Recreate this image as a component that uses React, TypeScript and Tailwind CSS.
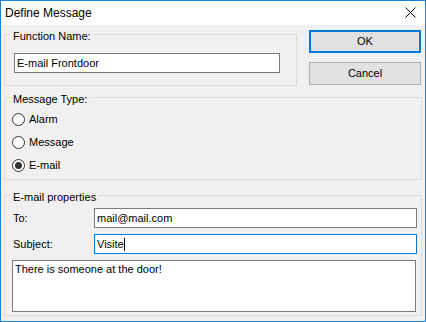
import React from "react";

type RadioProps = {
  label: string;
  checked?: boolean;
};

const Radio = ({ label, checked }: RadioProps) => {
  return (
    <div className="h-[23px] flex items-center">
      <span className="w-[13px] h-[13px] rounded-full border border-[#333333] bg-white flex items-center justify-center">
        {checked && <span className="w-[7px] h-[7px] rounded-full bg-[#333333]" />}
      </span>
      <span className="ml-[4px]">{label}</span>
    </div>
  );
};

const Legend = ({ children }: { children: React.ReactNode }) => (
  <legend className="ml-[5px] pl-[3px] pr-[2px] pt-[4px] leading-[13px]">{children}</legend>
);

const App = () => {
  return (
    <div className="w-[426px] h-[322px] border border-[#1883d7] bg-[#f0f0f0] flex flex-col text-[11px] leading-[13px] text-black font-['Liberation_Sans',Arial,sans-serif]">
      {/* title bar */}
      <div className="h-[24px] bg-white flex items-center justify-between pl-[4px] pr-[9px] shrink-0">
        <span className="text-[12px] pt-[1px]">Define Message</span>
        <svg width="11" height="11" viewBox="0 0 11 11" className="mb-[1px]">
          <path d="M0.5 0.5 L10.5 10.5 M10.5 0.5 L0.5 10.5" stroke="#000" strokeWidth="1" />
        </svg>
      </div>

      <div className="flex-1 px-[3px]">
        <div className="flex">
          <fieldset className="w-[293px] mt-[1px] border border-[#dcdcdc]">
            <Legend>Function Name:</Legend>
            <div className="pl-[9px] pb-[12px]">
              <input
                readOnly
                value="E-mail Frontdoor"
                className="mt-[10px] w-[266px] h-[20px] border border-[#7a7a7a] bg-white px-[2px] outline-none"
              />
            </div>
          </fieldset>
          <div className="ml-[12px] mt-[5px] flex flex-col gap-[9px]">
            <button className="w-[112px] h-[23px] border-2 border-[#0078d7] bg-[#e1e1e1]">OK</button>
            <button className="w-[112px] h-[23px] border border-[#adadad] bg-[#e1e1e1]">Cancel</button>
          </div>
        </div>

        <fieldset className="mt-[3px] w-[418px] border border-[#dcdcdc]">
          <Legend>Message Type:</Legend>
          <div className="mt-[2px] pl-[7px] pb-[2px] flex flex-col">
            <Radio label="Alarm" />
            <Radio label="Message" />
            <Radio label="E-mail" checked />
          </div>
        </fieldset>

        <fieldset className="mt-[7px] w-[418px] border border-[#dcdcdc]">
          <Legend>E-mail properties</Legend>
          <div className="mt-[4px] pl-[8px] pr-[4px] pb-[3px] flex flex-col gap-[6px]">
            <div className="flex items-center">
              <span className="w-[81px]">To:</span>
              <input
                readOnly
                value="mail@mail.com"
                className="w-[323px] h-[20px] border border-[#7a7a7a] bg-white px-[2px] outline-none"
              />
            </div>
            <div className="flex items-center">
              <span className="w-[81px]">Subject:</span>
              <div className="w-[323px] h-[20px] border border-[#0078d7] bg-white px-[2px] flex items-center">
                <span>Visite</span>
                <span className="w-[1px] h-[13px] bg-black" />
              </div>
            </div>
            <div className="-ml-[1px] w-[404px] h-[52px] border border-[#7a7a7a] bg-white px-[2px] pt-[2px]">
              There is someone at the door!
            </div>
          </div>
        </fieldset>
      </div>
    </div>
  );
};

export default App;
